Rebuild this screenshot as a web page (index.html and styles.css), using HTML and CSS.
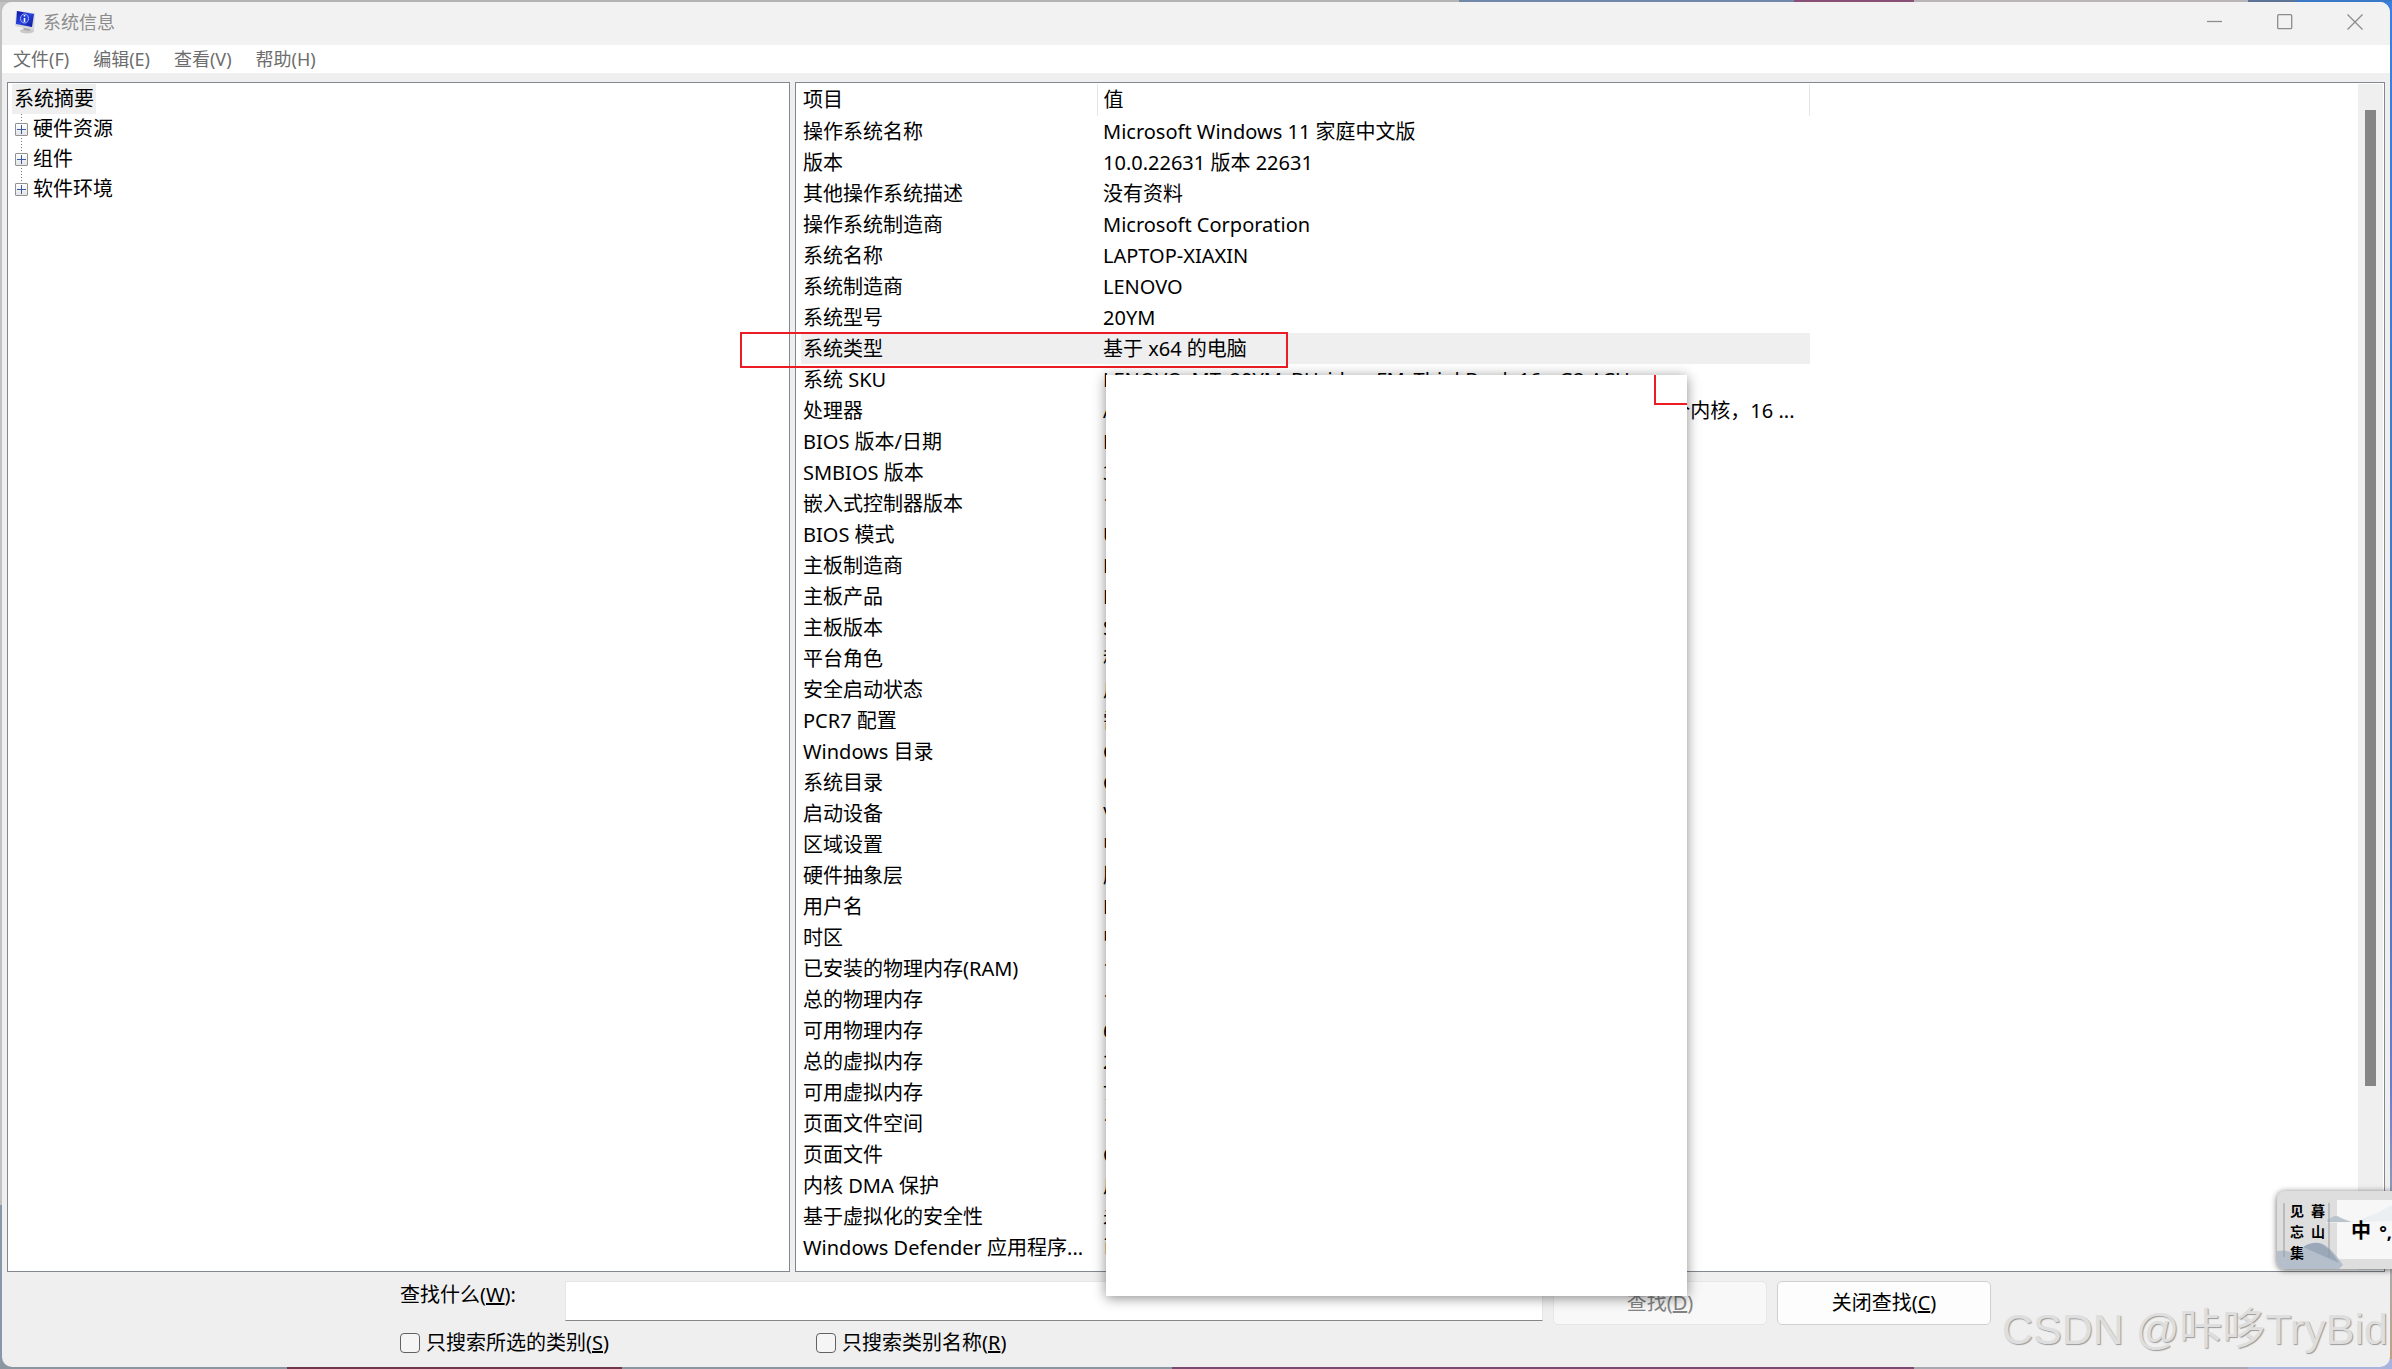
FILE: index.html
```html
<!DOCTYPE html>
<html lang="zh-CN">
<head>
<meta charset="utf-8">
<title>系统信息</title>
<link rel="stylesheet" href="styles.css">
</head>
<body>
<div class="window">
  <header class="titlebar">
    <svg class="app-icon" width="22" height="24" viewBox="0 0 22 24" aria-hidden="true">
      <defs><linearGradient id="scr" x1="0" y1="0" x2="1" y2="1"><stop offset="0" stop-color="#0a12a0"/><stop offset=".5" stop-color="#2a44e0"/><stop offset="1" stop-color="#0a1490"/></linearGradient></defs>
      <ellipse cx="13" cy="21" rx="7" ry="2.6" fill="#c9c9c9"/>
      <path d="M9 16l7 2v3l-6-1z" fill="#a9a9a9"/>
      <path d="M2 1l19 2-1 17L1 16z" fill="#d3d6dd"/>
      <path d="M3 1l17 3-2 13L2 14z" fill="url(#scr)"/>
      <ellipse cx="10.500" cy="8.500" rx="4" ry="4.500" fill="none" stroke="#9db4ff"/>
      <path d="M10.500 5v1.500M10.500 8v4" stroke="#fff" stroke-width="1.500"/>
    </svg>
    <h1>系统信息</h1>
    <div class="controls">
      <button type="button" aria-label="最小化"><svg width="16" height="16" viewBox="0 0 16 16"><path d="M0 7.500h15"/></svg></button>
      <button type="button" aria-label="最大化"><svg width="16" height="16" viewBox="0 0 16 16"><rect x=".7" y=".7" width="14" height="14" rx="1"/></svg></button>
      <button type="button" aria-label="关闭"><svg width="16" height="16" viewBox="0 0 16 16"><path d="M.5.5l15 15M15.500.5l-15 15"/></svg></button>
    </div>
  </header>
  <nav class="menubar">
    <button type="button">文件(F)</button>
    <button type="button">编辑(E)</button>
    <button type="button">查看(V)</button>
    <button type="button">帮助(H)</button>
  </nav>
  <main class="panes">
    <ul class="tree">
      <li class="root"><span>系统摘要</span></li>
      <li class="node"><i class="plus"></i><span>硬件资源</span></li>
      <li class="node"><i class="plus"></i><span>组件</span></li>
      <li class="node"><i class="plus"></i><span>软件环境</span></li>
    </ul>
    <section class="details">
      <table class="list">
        <colgroup><col class="col-item"><col class="col-value"></colgroup>
        <thead><tr><th>项目</th><th>值</th></tr></thead>
        <tbody>
          <tr><td>操作系统名称</td><td>Microsoft Windows 11 家庭中文版</td></tr>
          <tr><td>版本</td><td>10.0.22631 版本 22631</td></tr>
          <tr><td>其他操作系统描述</td><td>没有资料</td></tr>
          <tr><td>操作系统制造商</td><td>Microsoft Corporation</td></tr>
          <tr><td>系统名称</td><td>LAPTOP-XIAXIN</td></tr>
          <tr><td>系统制造商</td><td>LENOVO</td></tr>
          <tr><td>系统型号</td><td>20YM</td></tr>
          <tr class="selected"><td>系统类型</td><td>基于 x64 的电脑</td></tr>
          <tr><td>系统 SKU</td><td>LENOVO_MT_20YM_BU_idea_FM_ThinkBook 16p G2 ACH</td></tr>
          <tr><td>处理器</td><td><div class="split"><span>AMD</span><span>8 个内核，16 ...</span></div></td></tr>
          <tr><td>BIOS 版本/日期</td><td>L</td></tr>
          <tr><td>SMBIOS 版本</td><td>3</td></tr>
          <tr><td>嵌入式控制器版本</td><td>1</td></tr>
          <tr><td>BIOS 模式</td><td>U</td></tr>
          <tr><td>主板制造商</td><td>L</td></tr>
          <tr><td>主板产品</td><td>L</td></tr>
          <tr><td>主板版本</td><td>S</td></tr>
          <tr><td>平台角色</td><td>移</td></tr>
          <tr><td>安全启动状态</td><td>启</td></tr>
          <tr><td>PCR7 配置</td><td>需</td></tr>
          <tr><td>Windows 目录</td><td>C</td></tr>
          <tr><td>系统目录</td><td>C</td></tr>
          <tr><td>启动设备</td><td>\</td></tr>
          <tr><td>区域设置</td><td>中</td></tr>
          <tr><td>硬件抽象层</td><td>版</td></tr>
          <tr><td>用户名</td><td>L</td></tr>
          <tr><td>时区</td><td>中</td></tr>
          <tr><td>已安装的物理内存(RAM)</td><td>1</td></tr>
          <tr><td>总的物理内存</td><td>1</td></tr>
          <tr><td>可用物理内存</td><td>6</td></tr>
          <tr><td>总的虚拟内存</td><td>2</td></tr>
          <tr><td>可用虚拟内存</td><td>7</td></tr>
          <tr><td>页面文件空间</td><td>1</td></tr>
          <tr><td>页面文件</td><td>C</td></tr>
          <tr><td>内核 DMA 保护</td><td>启</td></tr>
          <tr><td>基于虚拟化的安全性</td><td>未</td></tr>
          <tr><td>Windows Defender 应用程序...</td><td>已</td></tr>
        </tbody>
      </table>
      <div class="scrollbar"><div class="thumb"></div></div>
      <div class="marker"></div>
      <div class="popup"><div class="popup-corner"></div></div>
    </section>
  </main>
  <form class="find">
    <div class="find-row">
      <label class="find-label" for="what">查找什么(<u>W</u>):</label>
      <input class="find-input" id="what" type="text">
      <button class="btn" type="button" disabled>查找(<u>D</u>)</button>
      <button class="btn" type="button">关闭查找(<u>C</u>)</button>
    </div>
    <div class="find-options">
      <label><input type="checkbox">只搜索所选的类别(<u>S</u>)</label>
      <label><input type="checkbox">只搜索类别名称(<u>R</u>)</label>
    </div>
  </form>
</div>
<div class="ime">
  <svg class="ime-art" width="115" height="78" viewBox="0 0 115 78" aria-hidden="true">
    <rect x="60" y="9" width="55" height="59" fill="#f7f7f7"/>
    <path d="M48 32q8-7 16-5l14 4q14-6 22-9l15-8v16z" fill="#eceff1"/>
    <path d="M50 30q8-8 14-3l10 4H50z" fill="#b9c4cd"/>
    <path d="M0 60q10-2 18 3 12-11 24-11 10 1 24 22l-4 4H6q-6-2-6-6z" fill="#b4bfcb"/>
    <path d="M26 56q8-5 16-4 10 3 20 20-18-8-36-16z" fill="#9aa8b9"/>
    <path d="M7 12v54M52 12v54" stroke="#999"/>
  </svg>
  <span class="verse left">见忘集</span>
  <span class="verse right">暮山</span>
  <span class="mode">中</span>
  <span class="punct">°,</span>
</div>
<div class="watermark">CSDN @咔哆TryBid</div>
</body>
</html>
```
FILE: styles.css
```css
* { box-sizing: border-box; }

body {
  margin: 0;
  height: 100vh;
  padding: 2px;
  display: flex;
  position: relative;
  overflow: hidden;
  font: 20px/30px "Noto Sans", "Noto Sans CJK SC", sans-serif;
  color: #000;
  background:
    linear-gradient(90deg, #b4b4b4 0 61%, #7188a8 61% 75%, #8a5078 75% 80%, #b9b4b8 80% 94%, #5c7396 94% 96%, #3a78c8 96%) top / 100% 2px no-repeat,
    linear-gradient(90deg, #8b97a0 0 12%, #70384c 12% 26%, #8b97a0 26% 49%, #7a4a70 49% 80%, #a8a8b0 80% 94%, #a9b4dd 94%) bottom / 100% 10px no-repeat,
    linear-gradient(180deg, #3a80e0 0, #4a78b8 60%, #6a80c8 80%, #a8adb0 92%, #c0a080) right / 10px 100% no-repeat,
    linear-gradient(180deg, #c2c2c2 0 88%, #8a97a8 88%);
}

button, input { font: inherit; color: inherit; }

.window {
  flex: 1;
  display: flex;
  flex-direction: column;
  background: #efefef;
  border-radius: 10px;
}

.titlebar {
  height: 43px;
  display: flex;
  align-items: center;
  padding: 0 0 3px 12px;
  background: #f2f2f2;
  border-radius: 10px 10px 0 0;
}
.titlebar h1 {
  margin: 0 auto 0 7px;
  font-size: 18px;
  font-weight: 400;
  color: #8c8c8c;
}
.controls { display: flex; }
.controls button {
  width: 70px;
  height: 40px;
  padding: 0;
  border: 0;
  background: none;
}
.controls svg { display: block; margin: auto; fill: none; stroke: #8c8c8c; stroke-width: 1.3; }

.menubar {
  height: 28px;
  display: flex;
  gap: 24px;
  padding-left: 11px;
  background: #fff;
}
.menubar button {
  padding: 0;
  border: 0;
  background: none;
  font-size: 18px;
  line-height: 28px;
  color: #6d6d6d;
}

.panes {
  flex: 1;
  display: grid;
  grid-template-columns: 783fr 1590fr;
  gap: 5px;
  padding: 9px 5px 0;
}
.tree, .details {
  background: #fff;
  border: 1px solid #828790;
}
.tree {
  margin: 0;
  padding: 1px 4px;
  list-style: none;
}
.tree li { height: 30px; display: flex; align-items: center; }
.root span { padding: 0 2px; background: #efefef; }
.node {
  padding-left: 3px;
  gap: 5px;
  background: repeating-linear-gradient(180deg, #777 0 1px, #fff 1px 3px) 9px 0 / 1px 30px no-repeat;
}
.node:last-child { background-size: 1px 15px; }
.plus {
  width: 13px;
  height: 13px;
  border: 1px solid #919191;
  border-radius: 1px;
  background:
    linear-gradient(#3c5aa0, #3c5aa0) center / 9px 1px no-repeat,
    linear-gradient(#3c5aa0, #3c5aa0) center / 1px 9px no-repeat,
    linear-gradient(#fff, #e4e4e4);
}

.details {
  position: relative;
  display: flex;
  justify-content: space-between;
  align-items: flex-start;
  padding: 1px 1px 1px 5px;
}
.list {
  width: 1009px;
  table-layout: fixed;
  border-collapse: collapse;
}
.col-item { width: 296px; }
.list th {
  height: 32px;
  padding: 0 2px;
  text-align: left;
  font-weight: 400;
  border-right: 1px solid #e5e5e5;
}
.list td {
  height: 31px;
  padding: 0 2px;
  white-space: nowrap;
  overflow: hidden;
}
.list th + th, .list td + td { padding-left: 6px; }
.selected { background: #efefef; }
.split { display: flex; justify-content: space-between; padding-right: 13px; }

.scrollbar {
  align-self: stretch;
  width: 25px;
  padding: 26px 7px 0;
  background: #efefef;
}
.thumb { height: 976px; background: #868686; }

.marker {
  position: absolute;
  left: -56px;
  top: 249px;
  width: 548px;
  height: 36px;
  border: 2px solid #ed1c24;
}
.popup {
  position: absolute;
  left: 310px;
  top: 292px;
  width: 581px;
  height: 921px;
  background: #fff;
  box-shadow: 0 2px 12px rgba(0, 0, 0, .45);
}
.popup-corner {
  width: 33px;
  height: 30px;
  margin-left: auto;
  border: solid #ed1c24;
  border-width: 0 0 2px 2px;
}

.find {
  padding: 9px 399px 14px 398px;
  display: flex;
  flex-direction: column;
  gap: 8px;
}
.find-row { display: flex; align-items: flex-start; gap: 10px; height: 44px; }
.find-label { width: 155px; line-height: 28px; }
.find-input {
  flex: 1;
  min-width: 0;
  height: 40px;
  border: 1px solid #e6e6e6;
  border-bottom-color: #868686;
  background: #fff;
  outline: 0;
}
.btn {
  width: 214px;
  height: 44px;
  border: 1px solid #d0d0d0;
  border-radius: 5px;
  background: #fdfdfd;
}
.btn:disabled { color: #838383; background: #f8f8f8; border-color: #e6e6e6; }
.find-options { display: flex; height: 20px; }
.find-options label { width: 416px; display: flex; align-items: center; }
.find-options input {
  appearance: none;
  width: 20px;
  height: 20px;
  margin: 0 6px 0 0;
  border: 1px solid #626262;
  border-radius: 4px;
  background: #f5f5f5;
}

.ime {
  position: absolute;
  right: 0;
  top: 1191px;
  width: 115px;
  height: 78px;
  overflow: hidden;
  border-radius: 8px 0 0 8px;
  background: #dedede;
  box-shadow: 0 1px 6px rgba(0, 0, 0, .6);
  font-family: "Noto Sans CJK SC", sans-serif;
  font-weight: 700;
}
.ime-art { display: block; }
.verse { position: absolute; top: 9px; font-size: 14px; line-height: 21px; width: 14px; }
.left { left: 13px; }
.right { left: 34px; }
.mode { position: absolute; left: 74px; top: 24px; font-size: 20px; }
.punct { position: absolute; right: 0; top: 26px; font-family: "Noto Sans", sans-serif; font-size: 18px; }

.watermark {
  position: absolute;
  right: 4px;
  bottom: 10px;
  font: 43px/60px "Liberation Sans", "Noto Sans CJK SC", sans-serif;
  color: #dedede;
  text-shadow: 1px 1px 1px #999;
  white-space: nowrap;
}
```
